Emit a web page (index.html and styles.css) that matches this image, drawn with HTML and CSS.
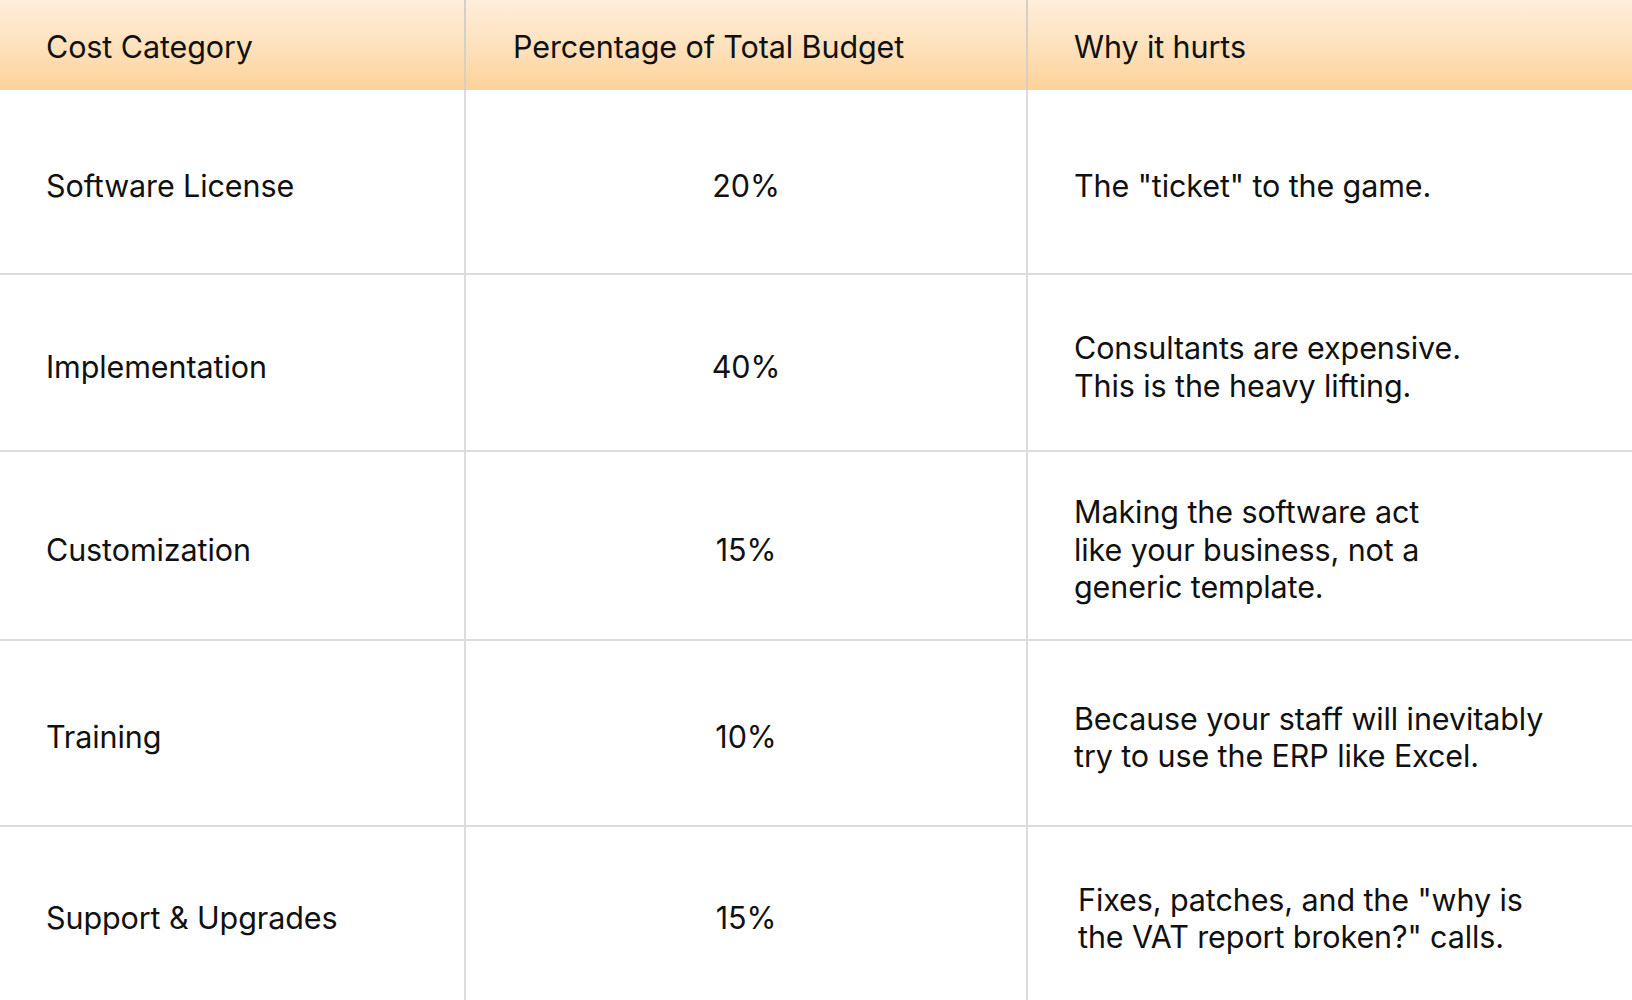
FILE: index.html
```html
<!DOCTYPE html>
<html lang="en">
<head>
<meta charset="utf-8">
<title>ERP cost breakdown</title>
<link rel="stylesheet" href="styles.css">
</head>
<body>
<div class="table">
  <div class="cell head">Cost Category</div>
  <div class="cell head">Percentage of Total Budget</div>
  <div class="cell head last">Why it hurts</div>

  <div class="cell">Software License</div>
  <div class="cell center">20%</div>
  <div class="cell last">The "ticket" to the game.</div>

  <div class="cell">Implementation</div>
  <div class="cell center">40%</div>
  <div class="cell last">Consultants are expensive.<br>This is the heavy lifting.</div>

  <div class="cell">Customization</div>
  <div class="cell center">15%</div>
  <div class="cell last">Making the software act<br>like your business, not a<br>generic template.</div>

  <div class="cell">Training</div>
  <div class="cell center">10%</div>
  <div class="cell last">Because your staff will inevitably<br>try to use the ERP like Excel.</div>

  <div class="cell">Support &amp; Upgrades</div>
  <div class="cell center">15%</div>
  <div class="cell last shift">Fixes, patches, and the "why is<br>the VAT report broken?" calls.</div>
</div>
</body>
</html>
```

FILE: styles.css
```css
html, body {
  margin: 0;
  padding: 0;
  background: #ffffff;
}
body {
  font-family: Inter, "Noto Sans", sans-serif;
  color: #111111;
  overflow: hidden;
}
.table {
  display: grid;
  grid-template-columns: 466px 562px 604px;
  grid-template-rows: 90px 185px 177px 189px 186px 176px;
  width: 1632px;
}
.cell {
  display: flex;
  align-items: center;
  padding: 8px 0 0 46px;
  font-size: 30.5px;
  line-height: 37.5px;
  letter-spacing: -0.1px;
  border-right: 2px solid #dcdcdc;
  border-bottom: 2px solid #dcdcdc;
  box-sizing: border-box;
}
.cell.last {
  border-right: none;
}
.head {
  background: linear-gradient(to bottom, #feeedc 0%, #fee3c0 45%, #fdd29a 100%);
  border-right-color: #d8cfc4;
  border-bottom: none;
  padding-top: 4px;
}
.head:nth-child(2) {
  padding-left: 47px;
}
.center {
  justify-content: center;
  padding-left: 0;
}
.shift {
  padding-left: 50px;
}
```
